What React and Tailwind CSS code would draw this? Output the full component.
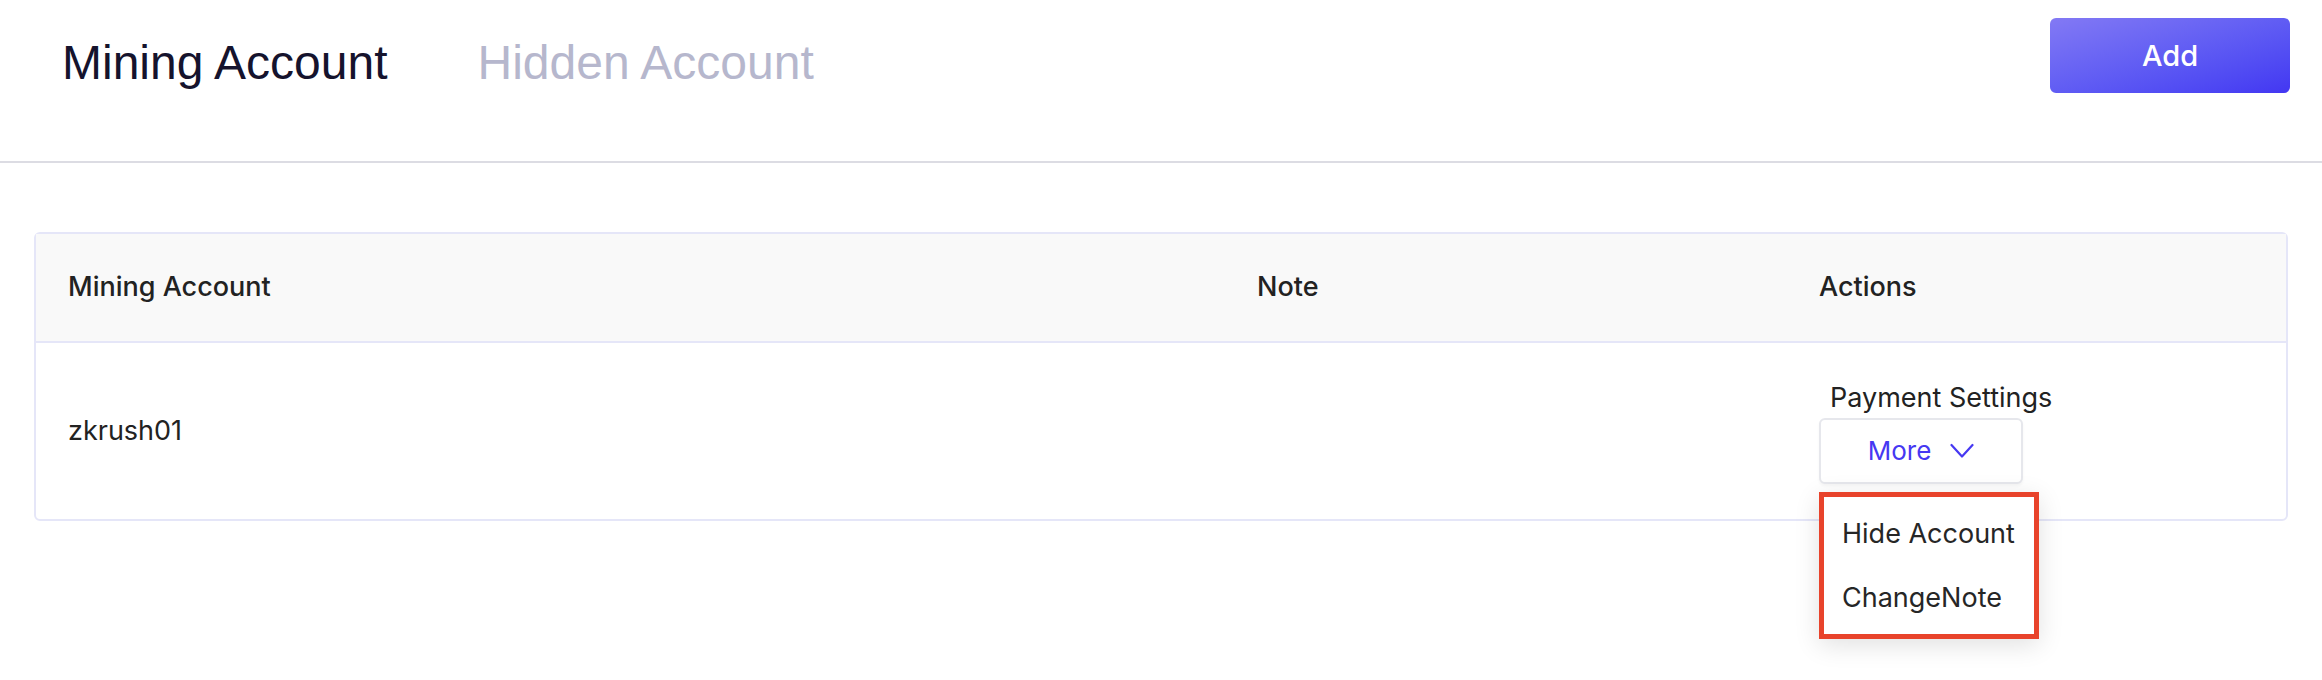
import React from 'react';

const tabs = [
  { label: 'Mining Account', active: true },
  { label: 'Hidden Account', active: false },
];

const menuItems = ['Hide Account', 'ChangeNote'];

const App = () => {
  return (
    <div className="min-h-[680px] w-full bg-white font-['Inter',sans-serif] text-[#242424]">
      {/* Top bar with tabs */}
      <div className="flex h-[163px] items-start justify-between border-b-2 border-[#dcdce3]">
        <div className="flex gap-[90px] pl-[62px] pt-[39px]">
          {tabs.map((tab) => (
            <div
              key={tab.label}
              className={`font-['Liberation_Sans',Arial,sans-serif] text-[48px] leading-none ${
                tab.active ? 'text-[#15132d]' : 'text-[#b6b7cd]'
              }`}
            >
              {tab.label}
            </div>
          ))}
        </div>
        <button className="mr-[32px] mt-[18px] flex h-[75px] w-[240px] items-center justify-center rounded-md bg-gradient-to-br from-[#8379f4] to-[#4336f2] text-[29px] font-medium text-white">
          Add
        </button>
      </div>

      {/* Accounts table */}
      <div className="px-[34px] pt-[69px]">
        <div className="rounded-md border-2 border-[#e5e6f8]">
          <div className="grid h-[109px] grid-cols-[1189px_562px_1fr] items-center border-b-2 border-[#e5e6f8] bg-[#f9f9f9] text-[27px] font-medium text-[#222]">
            <div className="pl-8">Mining Account</div>
            <div className="pl-8">Note</div>
            <div className="pl-8">Actions</div>
          </div>
          <div className="grid h-[176px] grid-cols-[1189px_562px_1fr] items-center text-[27px] text-[#222]">
            <div className="pl-8">zkrush01</div>
            <div className="pl-8"></div>
            <div className="relative flex flex-col items-start pl-8 pt-[2px]">
              <div className="pl-[11px] leading-[34px]">Payment Settings</div>
              <button className="mt-[3px] flex h-[66px] w-[204px] items-center justify-center gap-[19px] rounded-md border-2 border-[#e6e7ec] bg-white text-[26px] text-[#4638f2] shadow-[0_2px_3px_rgba(0,0,0,0.04)]">
                <span>More</span>
                <svg width="24" height="16" viewBox="0 0 24 16" fill="none">
                  <path d="M1.5 2 L12 13.5 L22.5 2" stroke="#4638f2" strokeWidth="2.2" strokeLinecap="round" strokeLinejoin="round" />
                </svg>
              </button>

              {/* Open dropdown */}
              <div className="absolute left-8 top-[113px] z-10 w-[220px] border-[5px] border-[#e8432b] bg-white pb-[3px] pt-[6px] shadow-[0_6px_24px_rgba(0,0,0,0.12)]">
                {menuItems.map((item) => (
                  <div key={item} className="flex h-[64px] items-center px-[18px] text-[27px] text-[#262626]">
                    {item}
                  </div>
                ))}
              </div>
            </div>
          </div>
        </div>
      </div>
    </div>
  );
};

export default App;
